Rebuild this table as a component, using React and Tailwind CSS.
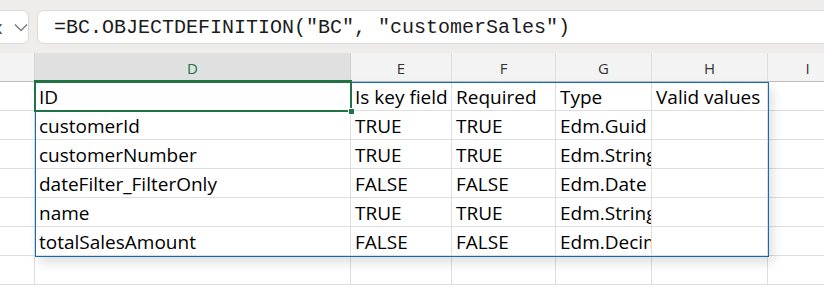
import React from "react";

const cols = [
  { w: "w-[35px]", key: "C" },
  { w: "w-[316px]", key: "D" },
  { w: "w-[101px]", key: "E" },
  { w: "w-[104px]", key: "F" },
  { w: "w-[96px]", key: "G" },
  { w: "w-[116px]", key: "H" },
  { w: "w-[80px]", key: "I" },
];

const rows = [
  ["", "ID", "Is key field", "Required", "Type", "Valid values", ""],
  ["", "customerId", "TRUE", "TRUE", "Edm.Guid", "", ""],
  ["", "customerNumber", "TRUE", "TRUE", "Edm.String", "", ""],
  ["", "dateFilter_FilterOnly", "FALSE", "FALSE", "Edm.Date", "", ""],
  ["", "name", "TRUE", "TRUE", "Edm.String", "", ""],
  ["", "totalSalesAmount", "FALSE", "FALSE", "Edm.Decimal", "", ""],
  ["", "", "", "", "", "", ""],
];

export default function App() {
  return (
    <div className="relative w-[824px] h-[288px] overflow-hidden bg-white">
      {/* Formula bar area */}
      <div className="h-[53px] bg-[#efedeb] flex items-start pt-[10px]">
        <div className="relative ml-[-12px] w-[41px] h-[34px] bg-white border border-[#dcdad8] rounded-[7px] overflow-hidden">
          <span className="absolute left-[4px] top-[3px] text-[18px] leading-[26px] text-[#444] font-['Open_Sans',sans-serif]">x</span>
          <svg className="absolute left-[25px] top-[12px]" width="14" height="9" viewBox="0 0 14 9">
            <path d="M1 1.5 L7 7.5 L13 1.5" fill="none" stroke="#7a7a7a" strokeWidth="1.4" />
          </svg>
        </div>
        <div className="ml-[8px] flex-1 mr-[-12px] h-[34px] bg-white border border-[#dcdad8] rounded-[7px] flex items-center pl-[16px]">
          <span className="font-['Liberation_Mono',monospace] text-[20px] leading-[24px] text-[#1b1b1b] whitespace-nowrap pt-[1px]">
            =BC.OBJECTDEFINITION("BC", "customerSales")
          </span>
        </div>
      </div>

      {/* Column headers */}
      <div className="flex h-[29px] border-b border-[#bdbdbd] font-['Open_Sans',sans-serif]">
        {cols.map((c) => (
          <div
            key={c.key}
            className={`${c.w} shrink-0 h-full flex items-center justify-center text-[15px] leading-[20px] pt-[1px] border-r ${
              c.key === "D"
                ? "bg-[#e0e0e0] text-[#1a7446] border-[#d0d0d0]"
                : c.key === "C"
                ? "bg-[#f3f3f3] text-[#333] border-[#d4d4d4]"
                : "bg-[#f3f3f3] text-[#333] border-[#dedede]"
            }`}
          >
            {c.key === "C" ? "" : c.key}
          </div>
        ))}
      </div>

      {/* Grid */}
      <div className="font-['Open_Sans',sans-serif]">
        {rows.map((r, i) => (
          <div key={i} className="flex h-[29px]">
            {cols.map((c, j) => (
              <div
                key={c.key}
                className={`${c.w} shrink-0 h-full border-r border-b border-[#dedede] overflow-hidden whitespace-nowrap pl-[4px] pt-[1px] text-[19px] leading-[28px] text-black`}
              >
                {r[j]}
              </div>
            ))}
          </div>
        ))}
      </div>

      {/* Spill range border */}
      <div className="absolute left-[35px] top-[82px] w-[734px] h-[175px] border border-[#0f6cbd] shadow-[4px_6px_10px_rgba(0,0,0,0.12)] pointer-events-none" />

      {/* Active cell */}
      <div className="absolute left-[34px] top-[81px] w-[318px] h-[31px] border-2 border-[#217346] pointer-events-none">
        <div className="absolute right-[-5px] bottom-[-5px] w-[7px] h-[7px] bg-[#217346] border border-white" />
      </div>
      {/* Column D header underline */}
      <div className="absolute left-[34px] top-[80px] w-[318px] h-[2px] bg-[#217346]" />
    </div>
  );
}
